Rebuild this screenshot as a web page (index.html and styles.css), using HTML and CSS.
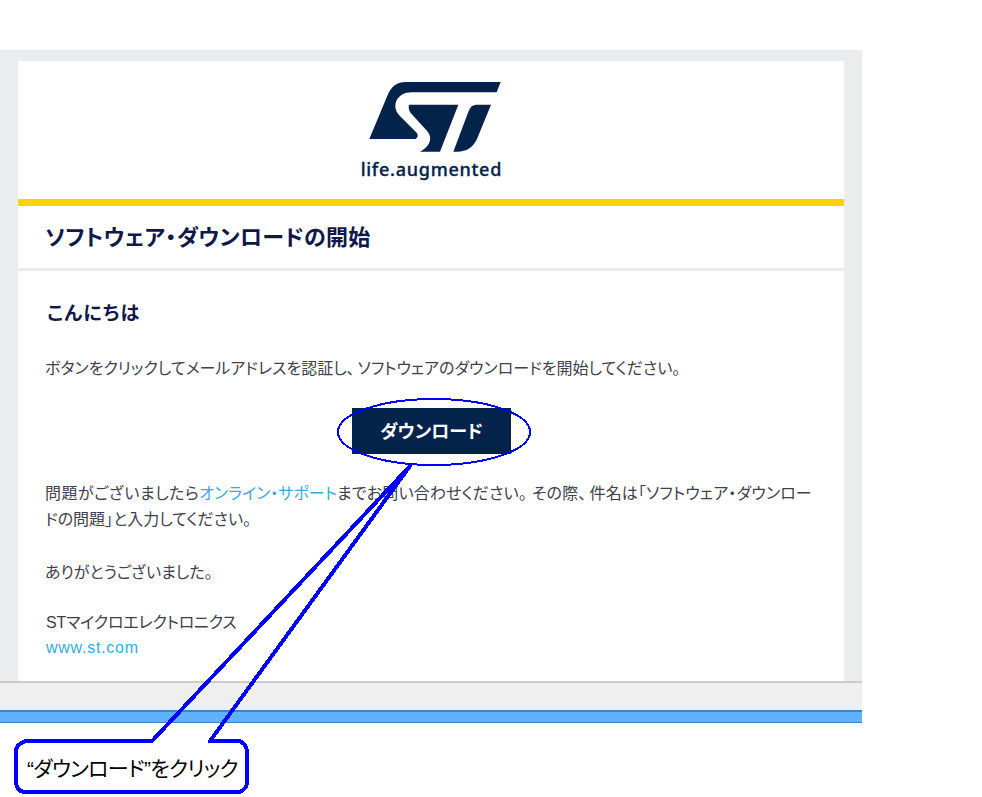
FILE: index.html
```html
<!DOCTYPE html>
<html lang="ja">
<head>
<meta charset="utf-8">
<title>ソフトウェア・ダウンロードの開始</title>
<link rel="stylesheet" href="styles.css">
</head>
<body>
<div class="window">
  <main class="mail">
    <header class="brand">
      <svg class="logo" viewBox="0 0 540 360" role="img" aria-label="ST life.augmented">
        <path d="M88 207 143 75Q159 36 197 36H482L470 67H215C170 67 152 109 179 137L230 188Q238 198 227 207Z"/>
        <path d="M207 104H355L300 245H240C268 232 280 205 262 184L214 131Q203 118 207 104Z"/>
        <path d="M453 104 411 207Q393 245 352 245H340L386 123Q394 104 409 104Z"/>
        <text x="62" y="318" textLength="422">life.augmented</text>
      </svg>
    </header>
    <h1>ソフトウェア・ダウンロードの開始</h1>
    <section class="content">
      <h2>こんにちは</h2>
      <p class="intro">ボタンをクリックしてメールアドレスを認証し<span class="comma">、</span>ソフトウェアのダウンロードを開始してください。</p>
      <a class="button">ダウンロード</a>
      <p class="help"><span class="lead">問題がございましたら</span><a>オンライン・サポート</a><span class="rest">までお問い合わせください<span class="stop">。</span>その際<span class="comma">、</span>件名は「ソフトウェア・ダウンロー</span><br>ドの問題」と入力してください。</p>
      <p class="thanks">ありがとうございました。</p>
      <p class="sign"><span class="company">STマイクロエレクトロニクス</span><br><a class="site">www.st.com</a></p>
    </section>
  </main>
  <footer class="status"></footer>
</div>
<svg class="notes" viewBox="0 0 982 797" aria-hidden="true">
  <ellipse cx="434" cy="432" rx="96" ry="33"/>
  <path d="M152 741H26Q16 744 16 751V783Q17 791 24 792H239Q246 790 247 783V751Q246 743 239 741H210L410 466Z"/>
</svg>
<div class="callout">“ダウンロード”をクリック</div>
</body>
</html>
```
FILE: styles.css
```css
* { box-sizing: border-box; }
body {
  margin: 0;
  width: 982px;
  height: 797px;
  overflow: hidden;
  position: relative;
  background: #fff;
  color: #40404d;
  font-family: "Liberation Sans", "Noto Sans CJK JP", sans-serif;
  font-feature-settings: "palt";
}
.window { width: 862px; height: 673px; margin-top: 50px; padding-top: 11px; background: #ebecee; }
.mail { width: 826px; height: 620px; margin: 0 18px; background: #fff; }
.brand { height: 145px; padding: 9px 0 0 322px; border-bottom: 7px solid #ffd200; }
.logo { display: block; width: 180px; height: 120px; fill: #03234b; }
.logo text { font: 500 54px "Noto Sans", sans-serif; stroke: #03234b; stroke-width: 1; }
h1, h2, p { margin: 0; font-weight: normal; white-space: nowrap; }
h1 { height: 65px; padding-left: 27px; border-bottom: 3px solid #ebecf0; color: #10184a; font-size: 22px; font-weight: bold; line-height: 63px; letter-spacing: .3px; }
.content { display: flex; flex-direction: column; padding: 29px 28px 0 27px; font-size: 16px; }
h2 { padding-left: 2px; color: #10184a; font-size: 19px; font-weight: bold; line-height: 27px; letter-spacing: 1.2px; }
.intro { margin-top: 29px; line-height: 25px; }
.comma { margin-right: 3px; }
.button { align-self: center; width: 159px; height: 46px; margin: 27px 0 0 2px; background: #03234b; color: #fff; font-size: 18px; font-weight: bold; line-height: 48px; text-align: center; }
.help { margin-top: 27px; line-height: 26px; }
.help a, .site { color: #39a9dc; }
.lead { letter-spacing: .5px; }
.rest { letter-spacing: .15px; }
.stop { margin-right: 5px; }
.thanks { margin-top: 27px; line-height: 26px; }
.sign { margin-top: 24px; line-height: 25px; }
.company { margin-left: 1px; letter-spacing: -.2px; }
.site { margin-left: 1px; letter-spacing: .75px; }
.status { height: 42px; border-top: 2px solid #ccc; border-bottom: 1px solid #3e83c4; background: linear-gradient(#efefef 27px, #4282b8 27px, #4282b8 29px, #62b1fc 29px); }
.notes { position: absolute; inset: 0; width: 982px; height: 797px; fill: none; stroke: #00f; shape-rendering: crispEdges; }
.notes ellipse { stroke-width: 2; }
.notes path { stroke-width: 4; stroke-linejoin: round; }
.callout { position: absolute; left: 27px; top: 753px; color: #000; font-size: 21px; line-height: 32px; white-space: nowrap; letter-spacing: -.65px; }
```
